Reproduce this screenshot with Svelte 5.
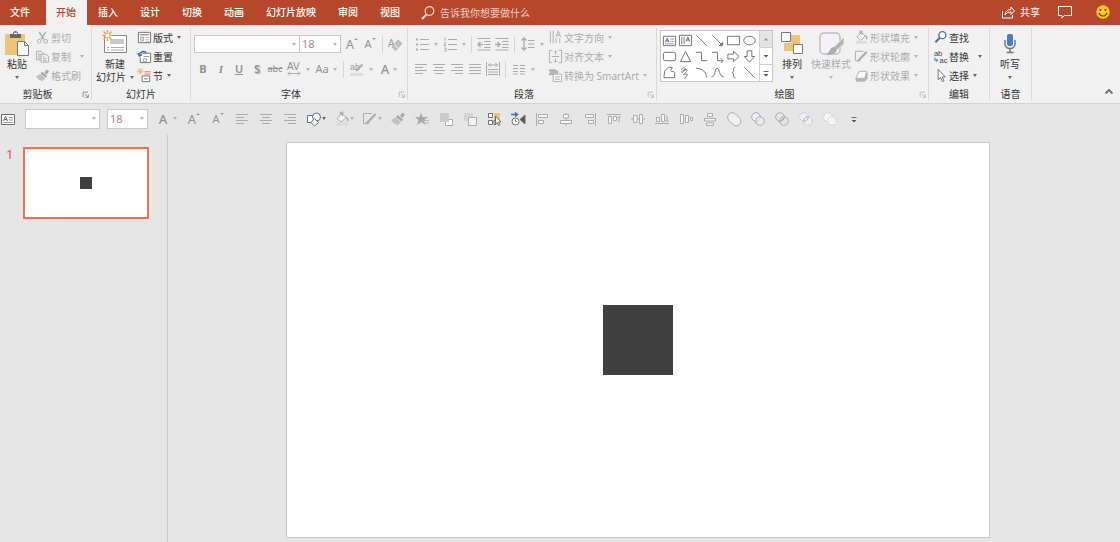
<script lang="ts">
	type Tool = { icon?: string; text?: string; label: string; caret?: boolean; on?: boolean; cls?: string };

	const tabs = ['文件', '开始', '插入', '设计', '切换', '动画', '幻灯片放映', '审阅', '视图'];
	let activeTab = $state('开始');
	let query = $state('');

	const clipboard: Tool[] = [
		{ icon: 'cut', label: '剪切' },
		{ icon: 'copy', label: '复制', caret: true, cls: 'far' },
		{ icon: 'brush', label: '格式刷' }
	];
	const slideTools: Tool[] = [
		{ icon: 'layout', label: '版式', caret: true, on: true },
		{ icon: 'reset', label: '重置', on: true },
		{ icon: 'section', label: '节', caret: true, on: true }
	];
	const paragraph: Tool[] = [
		{ icon: 'textDir', label: '文字方向', caret: true },
		{ icon: 'textAlign', label: '对齐文本', caret: true },
		{ icon: 'smartArt', label: '转换为 SmartArt', caret: true }
	];
	const shapeTools: Tool[] = [
		{ icon: 'bucket', label: '形状填充', caret: true },
		{ icon: 'outline', label: '形状轮廓', caret: true },
		{ icon: 'effect', label: '形状效果', caret: true }
	];
	const editTools: Tool[] = [
		{ icon: 'find', label: '查找', on: true },
		{ icon: 'replace', label: '替换', caret: true, on: true, cls: 'far' },
		{ icon: 'cursor', label: '选择', caret: true, on: true }
	];

	const gallery = [
		'textbox', 'vtextbox', 'line', 'arrowLine', 'rect', 'oval',
		'round', 'triangle', 'elbow', 'elbowArrow', 'rightArrow', 'downArrow',
		'freeform', 'scribble', 'arc', 'curve', 'brace', 'line'
	];

	const quick: Tool[] = [
		{ icon: 'alignLeft', label: '左对齐' },
		{ icon: 'alignCenter', label: '居中' },
		{ icon: 'alignRight', label: '右对齐' },
		{ icon: 'shapes', label: '形状', caret: true, on: true },
		{ icon: 'bucket', label: '填充', caret: true },
		{ icon: 'outline', label: '轮廓', caret: true },
		{ icon: 'brush', label: '格式刷' },
		{ icon: 'star', label: '动画' },
		{ icon: 'forward', label: '上移一层' },
		{ icon: 'backward', label: '下移一层' },
		{ icon: 'selectPane', label: '选择窗格', on: true },
		{ icon: 'animPane', label: '动画窗格', on: true },
		{ icon: 'objLeft', label: '左对齐对象' },
		{ icon: 'objCenter', label: '水平居中' },
		{ icon: 'objRight', label: '右对齐对象' },
		{ icon: 'objTop', label: '顶端对齐' },
		{ icon: 'objMiddle', label: '垂直居中' },
		{ icon: 'objBottom', label: '底端对齐' },
		{ icon: 'distH', label: '横向分布' },
		{ icon: 'distV', label: '纵向分布' },
		{ icon: 'union', label: '结合' },
		{ icon: 'combine', label: '组合' },
		{ icon: 'fragment', label: '拆分' },
		{ icon: 'intersect', label: '相交' },
		{ icon: 'subtract', label: '剪除' },
		{ icon: 'more', label: '自定义快速访问工具栏', on: true }
	];

	const box = 'fill="#f6f6f6"';

	// everything small is drawn on a 16 x 16 grid
	const icons: Record<string, string> = {
		search: '<circle cx="9.500" cy="6" r="4.300" stroke-width="1.300"/><path d="M6.500 9.500L2 14" stroke-width="1.800"/>',
		share: '<path d="M2.500 7v7h10v-3M5 11c.5-4 3-5.500 6-5.500V3l3.500 4L11 10.500V8c-3 0-4.500 1-6 3z"/>',
		comment: '<path d="M1.500 2.500h13v9H7.500L5 14v-2.500H1.500z"/>',
		cut: '<path d="M4.500 2l5 8M11.500 2l-5 8" stroke-width="1.500"/><circle cx="4.500" cy="12" r="2"/><circle cx="11.500" cy="12" r="2"/>',
		copy: '<path d="M1.500 2.500h5l2 2v7h-7zM3 5.500h3M3 7.500h3M3 9.500h3"/><path d="M6.500 5.500h5l3 2.500v6h-8z" fill="#f1f1f1"/><path d="M8.500 8.500h2M8.500 10.500h4M8.500 12.500h4"/>',
		brush: '<path d="M10 5l2.500-3.500L15 3.500 12.500 7z" fill="#a6a6a6" stroke="none"/><path d="M7.500 4l5.500 4.500-1.500 2L6 6z" fill="#a6a6a6" stroke="none"/><path d="M5.500 6.500l5.500 4.500-4 3.500-1.500-2-1 .5L1 9z" fill="#c0c0c0" stroke="none"/>',
		layout: '<path d="M1.500 2.500h13v11h-13z" fill="#fff"/><path d="M3 5h10" stroke="#999" stroke-width="1.500"/><path d="M4 7.500h3v4H4z" fill="#ddd" stroke="#aaa"/><path d="M9 8h4M9 10h4M9 12h4" stroke="#bbb"/>',
		reset: '<path d="M5.500 4.500h9v10h-11V9" fill="#fff"/><path d="M7 8h6M7 10.500h3v3H7z" stroke="#999"/><path d="M2.500 7C3 3 6 1.500 10 3.500M1 4.500l1.500 3 3-1.500" stroke="#3b6ea5" stroke-width="1.500"/>',
		section: '<path d="M8 4h6.500" stroke="#d9735a"/><path d="M8 6.500h6.500" stroke="#d9735a"/><path d="M5.500 8.500h8v6h-8z" fill="#fff"/><path d="M7.500 11.500h4"/><path d="M3.500 0v7M0 3.500h7M1 1l5 5M6 1L1 6" stroke="#ecb25e"/>',
		textDir: '<path d="M2.500 1v13M5.500 1v13M8.500 9v5M12.500 9v5M8.500 7.500L11 1l2.500 6.500M9.500 5.500h3"/>',
		textAlign: '<path d="M4.500 1.500h-3v13h3M11.500 1.500h3v13h-3M4 8h8M8 2v4M6.500 3.500L8 2l1.500 1.500M8 10v4M6.500 12.500L8 14l1.500-1.500"/>',
		smartArt: '<path d="M1 2h7l3 2.500L8 7H1l2-2.500z" fill="#b5b5b5"/><path d="M5.500 6.500h9v8h-9z" fill="#f6f6f6"/><path d="M7.500 9.500h5M7.500 12h5"/>',
		bucket: '<path d="M3 7.500L8 2.500l4 4-5 4.500z" fill="#f6f6f6"/><path d="M6.500 4V1.500h2V5M12 6c1.500 1 2 2.500 1.500 4" stroke-width="1.500"/><path d="M2 13h12" stroke="#dcdcdc" stroke-width="3"/>',
		outline: '<path d="M10 2.500H1.500v10h3"/><path d="M5.500 11.500L13.500 3" stroke-width="2.200"/><path d="M4 13l2.500-.7-1.500-1.500z" fill="#aaa"/>',
		effect: '<path d="M5.500 3.500h8L11.500 11H2z" fill="#fafafa"/><path d="M2 11.500h9.500L14 5v6l-2.500 3h-9z" fill="#b4b4b4" stroke="#b4b4b4"/>',
		find: '<g stroke="#3f72ad"><circle cx="10" cy="5.500" r="3.700" fill="#fff" stroke-width="1.400"/><path d="M7 8.500L2.500 13" stroke-width="2.200"/></g>',
		replace: '<g stroke="none" fill="#444" font-family="Liberation Sans" font-size="8"><text x="1" y="7">ab</text><text x="7" y="15">ac</text></g><path d="M2 9v3h3M3.500 10.500L5 12l-1.500 1.500" stroke="#3f72ad"/>',
		cursor: '<path d="M5.500 1.500v11l2.600-2.400 2 4.400 1.700-.8-2-4.200h3.400z" fill="#fff"/>',
		alignLeft: '<path d="M2 3.500h12M2 6.500h8M2 9.500h12M2 12.500h8"/>',
		alignCenter: '<path d="M2 3.500h12M4 6.500h8M2 9.500h12M4 12.500h8"/>',
		alignRight: '<path d="M2 3.500h12M6 6.500h8M2 9.500h12M6 12.500h8"/>',
		justify: '<path d="M2 3.500h12M2 6.500h12M2 9.500h12M2 12.500h12"/>',
		distribute: '<path d="M1.500 1v14M14.500 1v14M3.500 4h9M5.500 2l-2 2 2 2M10.500 2l2 2-2 2M3 8.500h10M3 11h10M3 13.500h10"/>',
		columns: '<path d="M2 4.500h5M2 7.500h5M2 10.500h5M2 13h5M9 4.500h5M9 7.500h5M9 10.500h5M9 13h5"/>',
		bullets: '<path d="M6 3.500h9M6 8.500h9M6 13.500h9"/><path d="M2 3.500h2M2 8.500h2M2 13.500h2" stroke-width="2"/>',
		numbers: '<path d="M6 3.500h9M6 8.500h9M6 13.500h9M3 1.500v3M2 7h2L2 9.500h2M2 12h2v3H2"/>',
		outdent: '<path d="M1.500 2.500h13M8 5.500h6.500M8 8.500h6.500M8 11.500h6.500M1.500 14h13"/><path d="M7 8.500H2M4.500 6L2 8.500 4.500 11" stroke-width="1.500"/>',
		indent: '<path d="M1.500 2.500h13M8 5.500h6.500M8 8.500h6.500M8 11.500h6.500M1.500 14h13"/><path d="M1 8.500h5M3.500 6L6 8.500 3.500 11" stroke-width="1.500"/>',
		spacing: '<path d="M4 2v12M1.500 4.500L4 2l2.500 2.500M1.500 11.500L4 14l2.500-2.500" stroke-width="1.300"/><path d="M8 4.500h6.500M8 8h6.500M8 11.500h6.500"/>',
		eraser: '<text x="1" y="11" font-size="10" font-family="Liberation Sans" fill="#999" stroke="none">A</text><path d="M5 11L11 4l4 3.500L8.500 14.500z" fill="#c0c0c0" stroke="#b4b4b4"/><path d="M7 8.500l4 3.500" stroke="#f1f1f1"/>',
		highlight: '<text x="1" y="9" font-size="9" font-family="Liberation Sans" fill="#999" stroke="none">ab</text><path d="M7 10l6.500-6.500" stroke-width="2"/><path d="M1 13.500h13" stroke="#dcdcdc" stroke-width="3"/>',
		charSpace: '<text x="1" y="9" font-size="10" font-family="Liberation Sans" fill="#8c8c8c" stroke="none">AV</text><path d="M2 12.500h12M4 10.500l-2 2 2 2M12 10.500l2 2-2 2"/>',
		textbox: '<path d="M1.500 3.500h13v10h-13z" fill="#fff"/><path d="M3.500 10l2-4.500 2 4.500M4.200 8.500h2.500" stroke="#4a6890"/><path d="M9 6.500h4M9 9h4M3.500 11.500H13" stroke="#999"/>',
		vtextbox: '<path d="M1.500 2.500h13v11h-13z" fill="#fff"/><path d="M4 4v8M6.500 4v8" stroke="#777"/><path d="M8.500 9l2-4.500L12.500 9M9.200 7.500h2.500" stroke="#4a6890"/>',
		line: '<path d="M2.500 2.500l11 11"/>',
		arrowLine: '<path d="M2.500 2.500l11 11M13.500 10v3.500H10z"/>',
		rect: '<path d="M1.500 3.500h13v9h-13z"/>',
		oval: '<ellipse cx="8" cy="8" rx="6.200" ry="4.500"/>',
		round: '<rect x="1.500" y="3.500" width="13" height="9" rx="2"/>',
		triangle: '<path d="M8 2.500l5.500 11h-11z"/>',
		elbow: '<path d="M2 3.500h6v9h6"/>',
		elbowArrow: '<path d="M2 3.500h6v9h6M11.500 10l2.500 2.500-2.500 2.500"/>',
		rightArrow: '<path d="M2 5.500h6V2.500L14 8l-6 5.500v-3H2z"/>',
		downArrow: '<path d="M5.500 2v6H2.500L8 14l5.500-6h-3V2z"/>',
		freeform: '<path d="M2 13.500L3 6l4-3.500h4L9 6c1 2 4 0 4.500 2v5.500z"/>',
		scribble: '<path d="M4 5c1-4 5-2 3 1S2 8 5 6s6-2 4 1-5 4-2 3 4 0 2 2-3 3-1 2"/>',
		arc: '<path d="M2 3.500c7 0 11 4 11.500 10"/>',
		curve: '<path d="M1.500 12.500c5 0 3-9 6-9s2 9 7 9"/>',
		brace: '<path d="M10 2.500c-2 0-2 1-2 3s0 2-1.500 2.500C8 8.500 8 9 8 11s0 2.500 2 2.500"/>',
		shapes: '<path d="M1.500 4.500h8v7h-8z" fill="#fff" stroke="#5f6f86"/><circle cx="10.500" cy="6" r="4" fill="#f2f4f8" stroke="#5f6f86"/><path d="M8.500 7.500l4 4-4 3.500-3.500-3.500z" fill="#fff" stroke="#5f6f86"/>',
		star: '<path d="M7 1.500l1.500 4.500H14l-4 3 1.500 5-4-3-4.500 3L4.500 9 1 6h4.500z" fill="#a8a8a8" stroke="none"/><path d="M9 9.500h6M10 12h5" stroke="#b8b8b8"/>',
		forward: '<path d="M7.500 8.500h7v6h-7z" fill="#fff"/><path d="M2 2h9v9H2z" fill="#ccc" stroke="none"/>',
		backward: '<path d="M2 2h9v8H2z" fill="#d4d4d4" stroke="none"/><path d="M6.500 6.500h8v8h-8z" fill="#f3f3f3"/>',
		selectPane: '<path d="M8 2h6v7H8z" fill="#f3c07b" stroke="none"/><path d="M2.500 2.500h4v4h-4zM2.500 9.500h4v4h-4z" fill="#fff"/><path d="M8 9.500h2v4H8z" fill="#fff"/><path d="M9.500 5v8l1.800-1.500 1.200 3 1.400-.6-1.300-2.900H15z" fill="#fff"/>',
		animPane: '<path d="M1 3.500h6M5 1.500l2.500 2L5 5.500" stroke="#3f72ad" stroke-width="1.600"/><circle cx="5.500" cy="10.500" r="3.500" fill="#fff"/><path d="M5.500 8.500v2H7"/><path d="M15 4v9l-5-4.500z" fill="#555"/>',
		objLeft: `<path d="M2.500 2v13"/><path d="M4.500 3.500h9v3h-9zM4.500 9.500h5v3h-5z" ${box}/>`,
		objCenter: `<path d="M8 2v13"/><path d="M5.500 3.500h5v3.500h-5zM2.500 9.500h11v3h-11z" ${box}/>`,
		objRight: `<path d="M13.500 2v13"/><path d="M3.500 3.500h8v3h-8zM6.500 9.500h5v3h-5z" ${box}/>`,
		objTop: `<path d="M1 3.500h14"/><path d="M2.500 5.500h3v7h-3zM7.500 5.500h3v4h-3z" ${box}/><path d="M13 5.500v6M11.500 7L13 5.500 14.500 7"/>`,
		objMiddle: `<path d="M1 8h14"/><path d="M3.500 4.500H7v7H3.500zM9.500 3.500h3v9h-3z" ${box}/>`,
		objBottom: `<path d="M1 12.500h14"/><path d="M2.500 6.500h3v4h-3zM7.500 3.500h3v7h-3z" ${box}/><path d="M13 4.500v6M11.500 9l1.500 1.500L14.500 9"/>`,
		distH: `<path d="M2.500 3.500h3v9h-3zM7.500 4.500h3v7h-3zM12.500 6.500h2v3h-2z" ${box}/>`,
		distV: `<path d="M5.500 2.500h5v3h-5zM2.500 7.500h11v2.500h-11zM4.500 12h7v2.500h-7z" ${box}/>`,
		union: '<path d="M3 9.500A4.200 4.200 0 1 1 9.500 3l4 4A4.200 4.200 0 1 1 7 13.500z" fill="#f3eff6"/>',
		combine: '<circle cx="6" cy="6" r="4.300" fill="#f3eff6"/><circle cx="10" cy="10" r="4.300" fill="#f3eff6" fill-opacity=".6"/>',
		fragment: '<circle cx="6" cy="6" r="4.300"/><circle cx="10" cy="10" r="4.300"/><path d="M6.500 10L10 6.500M6 8l2-2M8 10l2-2"/>',
		intersect: '<g stroke-dasharray="1 1.500"><circle cx="6" cy="6" r="4.300" fill="#f3eff6"/><circle cx="10" cy="10" r="4.300" fill="#f3eff6"/></g><path d="M5.800 10.200a4.300 4.300 0 0 1 4.400-4.400 4.300 4.300 0 0 1-4.400 4.400z" fill="#fff"/>',
		subtract: '<g stroke-dasharray="1 2"><circle cx="6" cy="6" r="4.300" fill="#f7f2f9"/><circle cx="10" cy="10" r="4.300" fill="#f7f2f9"/></g>',
		more: '<path d="M5.500 6.500h5"/><path d="M5.500 9h5L8 11.500z" fill="#555" stroke="none"/>',
		moreUp: '<path d="M5.500 9.500h5L8 7z" fill="#999" stroke="none"/>',
		moreDown: '<path d="M5.500 7h5L8 9.500z" fill="#555" stroke="none"/>',
		launcher: '<path d="M5.500 12V5.500H12M8 8l4 4M12.500 8.500v4h-4"/>',
		collapse: '<path d="M4.500 9.500L8 6l3.500 3.500" stroke-width="1.800"/>'
	};
</script>

{#snippet ic(name: string, size = 16)}
	<svg class="icon" width={size} height={size} viewBox="0 0 16 16" aria-hidden="true">{@html icons[name]}</svg>
{/snippet}

{#snippet tool(t: Tool)}
	<button class="tool {t.cls ?? ''}" class:split={t.caret} disabled={!t.on} aria-label={t.label}>
		{#if t.icon}{@render ic(t.icon)}{:else}<span class="glyph">{t.text}</span>{/if}
		{#if t.caret}<span class="caret"></span>{/if}
	</button>
{/snippet}

{#snippet stack(list: Tool[])}
	<div class="stack">
		{#each list as t}
			<button class="row {t.cls ?? ''}" disabled={!t.on}>
				{@render ic(t.icon ?? '', 15)}
				<span>{t.label}</span>
				{#if t.caret}<span class="caret"></span>{/if}
			</button>
		{/each}
	</div>
{/snippet}

{#snippet footer(name: string, launcher: boolean, on = false)}
	<div class="footer">
		<span>{name}</span>
		{#if launcher}<button class="launcher" disabled={!on} aria-label="{name}设置">{@render ic('launcher', 12)}</button>{/if}
	</div>
{/snippet}

{#snippet grow(up: boolean)}
	<button class="tool" disabled aria-label={up ? '增大字号' : '减小字号'}>
		<span class={up ? 'glyph large' : 'glyph'}>A</span><span class="tick" class:down={!up}></span>
	</button>
{/snippet}

{#snippet combos()}
	<div class="combo name">
		<select aria-label="字体" disabled><option></option></select>
		<span class="caret"></span>
	</div>
	<div class="combo size">
		<select aria-label="字号" disabled><option>18</option></select>
		<span class="caret"></span>
	</div>
{/snippet}

<div class="app">
	<header>
		<nav>
			{#each tabs as tab}
				<button class="tab" class:active={tab === activeTab} onclick={() => (activeTab = tab)}>{tab}</button>
			{/each}
		</nav>
		<label class="search">
			{@render ic('search')}
			<input type="text" bind:value={query} placeholder="告诉我你想要做什么" aria-label="告诉我你想要做什么" />
		</label>
		<div class="account">
			<button>{@render ic('share')}共享</button>
			<button aria-label="批注">{@render ic('comment')}</button>
			<button aria-label="反馈">
				<svg width="14" height="14" viewBox="0 0 14 14" aria-hidden="true">
					<circle cx="7" cy="7" r="6.700" fill="#fbc91f" />
					<circle cx="4.500" cy="5" r="1.100" fill="#7a3b12" />
					<circle cx="9.500" cy="5" r="1.100" fill="#7a3b12" />
					<path d="M3 8c1.500 4 6.500 4 8 0" fill="none" stroke="#7a3b12" stroke-width="1.200" />
				</svg>
			</button>
		</div>
	</header>

	<div class="ribbon">
		<section class="group clip">
			<div class="body">
				<button class="big">
					<svg width="26" height="26" viewBox="0 0 26 26" aria-hidden="true">
						<path d="M1 4h20v21H1z" fill="#eec477" />
						<path d="M6 8V4h3c0-4 5-4 5 0h3v4z" fill="#666" />
						<path d="M10 3.500h3" stroke="#fff" stroke-width="1.500" />
						<path d="M13.500 11.500h7l4 4v10h-11z" fill="#fff" stroke="#777" />
						<path d="M20.500 11.500v4h4" fill="none" stroke="#777" />
					</svg>
					<span>粘贴</span>
					<span class="second"><span class="caret"></span></span>
				</button>
				{@render stack(clipboard)}
			</div>
			{@render footer('剪贴板', true, true)}
		</section>

		<section class="group slides">
			<div class="body">
				<button class="big">
					<svg width="26" height="26" viewBox="0 0 26 26" aria-hidden="true">
						<path d="M2.500 5.500h22v17h-22z" fill="#fff" stroke="#888" />
						<path d="M8 9h14v5H8z" fill="#c9c9c9" />
						<path d="M5 17.500h2M9 17.500h13M5 20h2M9 20h13" stroke="#aaa" />
						<path d="M5.500 0v11M0 5.500h11M1.500 1.500l8 8M9.500 1.500l-8 8" stroke="#eaa84f" stroke-width="1.500" />
						<circle cx="5.500" cy="5.500" r="2" fill="#fff" />
					</svg>
					<span>新建</span>
					<span class="second">幻灯片<span class="caret"></span></span>
				</button>
				{@render stack(slideTools)}
			</div>
			{@render footer('幻灯片', false)}
		</section>

		<section class="group font">
			<div class="body">
				<div class="lines">
					<div class="line">
						{@render combos()}
						<div class="pair">
							{@render grow(true)}
							{@render grow(false)}
						</div>
						<i class="bar"></i>
						{@render tool({ icon: 'eraser', label: '清除格式' })}
					</div>
					<div class="line">
						{@render tool({ text: 'B', label: '加粗', cls: 'bold' })}
						{@render tool({ text: 'I', label: '倾斜', cls: 'italic' })}
						{@render tool({ text: 'U', label: '下划线', cls: 'under' })}
						{@render tool({ text: 'S', label: '阴影', cls: 'shadow' })}
						{@render tool({ text: 'abc', label: '删除线', cls: 'strike' })}
						{@render tool({ icon: 'charSpace', label: '字符间距', caret: true })}
						{@render tool({ text: 'Aa', label: '更改大小写', caret: true })}
						<i class="bar"></i>
						{@render tool({ icon: 'highlight', label: '突出显示', caret: true })}
						{@render tool({ text: 'A', label: '字体颜色', caret: true, cls: 'color' })}
					</div>
				</div>
			</div>
			{@render footer('字体', true)}
		</section>

		<section class="group para">
			<div class="body">
				<div class="lines">
					<div class="line">
						{@render tool({ icon: 'bullets', label: '项目符号', caret: true })}
						{@render tool({ icon: 'numbers', label: '编号', caret: true })}
						<i class="bar"></i>
						{@render tool({ icon: 'outdent', label: '降低列表级别' })}
						{@render tool({ icon: 'indent', label: '提高列表级别' })}
						<i class="bar"></i>
						{@render tool({ icon: 'spacing', label: '行距', caret: true })}
					</div>
					<div class="line">
						{@render tool({ icon: 'alignLeft', label: '左对齐' })}
						{@render tool({ icon: 'alignCenter', label: '居中' })}
						{@render tool({ icon: 'alignRight', label: '右对齐' })}
						{@render tool({ icon: 'justify', label: '两端对齐' })}
						{@render tool({ icon: 'distribute', label: '分散对齐' })}
						<i class="bar"></i>
						{@render tool({ icon: 'columns', label: '分栏', caret: true })}
					</div>
				</div>
				{@render stack(paragraph)}
			</div>
			{@render footer('段落', true)}
		</section>

		<section class="group draw">
			<div class="body">
				<div class="gallery">
					<div class="cells">
						{#each gallery as shape}
							<button aria-label={shape}>{@render ic(shape, 15)}</button>
						{/each}
					</div>
					<div class="spin">
						<button disabled aria-label="上一行">{@render ic('moreUp')}</button>
						<button aria-label="下一行">{@render ic('moreDown')}</button>
						<button aria-label="其他">{@render ic('more')}</button>
					</div>
				</div>
				<button class="big">
					<svg width="26" height="26" viewBox="0 0 26 26" aria-hidden="true">
						<path d="M12 5h9v9h-9zM5 13h9v8H5z" fill="#eec477" />
						<path d="M2.500 2.500h9v9h-9zM14.500 14.500h9v9h-9z" fill="#fff" stroke="#777" />
					</svg>
					<span>排列</span>
					<span class="second"><span class="caret"></span></span>
				</button>
				<button class="big" disabled>
					<svg width="26" height="26" viewBox="0 0 26 26" aria-hidden="true">
						<rect x="2" y="3" width="20" height="21" rx="4" fill="#f6f1f8" stroke="#bdbdbd" stroke-width="1.500" />
						<path d="M26 7v7l-7 6-3-3z" fill="#b4b4b4" stroke="#f1f1f1" stroke-width=".7" />
						<path d="M16 17c2 0 3.500 2 2.500 4s-5 4.500-11 4c4-1 3-7 8.500-8z" fill="#adadad" />
					</svg>
					<span>快速样式</span>
					<span class="second"><span class="caret"></span></span>
				</button>
				{@render stack(shapeTools)}
			</div>
			{@render footer('绘图', true)}
		</section>

		<section class="group edit">
			<div class="body">{@render stack(editTools)}</div>
			{@render footer('编辑', false)}
		</section>

		<section class="group voice">
			<div class="body">
				<button class="big">
					<svg width="26" height="26" viewBox="0 0 26 26" aria-hidden="true">
						<rect x="10" y="4" width="6" height="12" rx="2" fill="#4a7ebb" />
						<path d="M8 10v4c0 6 10 6 10 0v-4M13 18.500v4M9.500 22.500h7" fill="none" stroke="#777" stroke-width="1.500" />
					</svg>
					<span>听写</span>
					<span class="second"><span class="caret"></span></span>
				</button>
			</div>
			{@render footer('语音', false)}
		</section>
		<button class="collapse" aria-label="折叠功能区">{@render ic('collapse')}</button>
	</div>

	<div class="quick">
		<button class="tool first" aria-label="文本框">{@render ic('textbox')}</button>
		{@render combos()}
		<div class="pair">
			{@render tool({ text: 'A', label: '字体颜色', caret: true, cls: 'color' })}
			{@render grow(true)}
			{@render grow(false)}
		</div>
		{#each quick as t}
			{@render tool(t)}
		{/each}
	</div>

	<main>
		<aside>
			<span class="number">1</span>
			<button class="thumb" aria-label="幻灯片 1"><span class="square"></span></button>
		</aside>
		<div class="stage">
			<div class="slide"><div class="square"></div></div>
		</div>
	</main>
</div>

<style>
	:global(body) {
		margin: 0;
	}

	.app {
		display: flex;
		flex-direction: column;
		min-height: 100vh;
		background: #e6e6e6;
		color: #333;
		font: 10px/14px 'Noto Sans', 'Noto Sans CJK SC', sans-serif;
	}

	button,
	select,
	input {
		margin: 0;
		padding: 0;
		border: 0;
		background: none;
		color: inherit;
		font: inherit;
	}

	button {
		white-space: nowrap;
	}

	button:disabled {
		color: #ababab;
	}

	.icon {
		display: block;
		flex: none;
		fill: none;
		stroke: currentColor;
	}

	.ribbon .icon,
	.quick .icon {
		color: #6e6e6e;
	}

	.ribbon button:disabled .icon,
	.quick button:disabled .icon {
		color: #ababab;
	}

	.caret {
		flex: none;
		width: 0;
		height: 0;
		border: 2px solid transparent;
		border-top: 3px solid #666;
		border-bottom: 0;
	}

	button:disabled .caret,
	.combo .caret {
		border-top-color: #b4b4b4;
	}

	header {
		display: flex;
		height: 25px;
		background: #b7472a;
		color: #fff;
	}

	nav {
		display: flex;
	}

	.tab {
		padding: 0 11px 2px;
		font-weight: 500;
	}

	.tab:first-child {
		padding: 0 16px 2px 10px;
	}

	.tab.active {
		padding-left: 10px;
		background: #f1f1f1;
		color: #b7472a;
	}

	.search {
		display: flex;
		align-items: center;
		gap: 4px;
		margin-left: 9px;
		color: #f7dcd4;
	}

	.search input {
		width: 120px;
		outline: none;
	}

	.search input::placeholder {
		color: #f0cfc5;
		opacity: 1;
	}

	.account {
		display: flex;
		align-items: center;
		gap: 17px;
		margin-left: auto;
		padding: 0 10px 2px;
	}

	.account button {
		display: flex;
		align-items: center;
		gap: 4px;
	}

	.account button:last-child {
		margin-left: 6px;
	}

	.ribbon {
		display: flex;
		padding: 3px 0;
		background: #f1f1f1;
		border-bottom: 1px solid #d2d2d2;
	}

	.group {
		display: flex;
		flex-direction: column;
		border-right: 1px solid #dadada;
	}

	.body {
		display: flex;
		height: 57px;
	}

	.footer {
		display: flex;
		align-items: center;
		height: 15px;
	}

	.footer span {
		flex: 1;
		padding-top: 2px;
		text-align: center;
	}

	.launcher {
		display: flex;
		align-self: flex-end;
		justify-content: flex-end;
		width: 16px;
	}

	.big {
		display: flex;
		flex-direction: column;
		align-items: center;
		padding-top: 2px;
	}

	.big > span {
		height: 14px;
		margin-top: 1px;
	}

	.big .second {
		display: flex;
		align-items: center;
		gap: 4px;
		height: 12px;
		margin: 0;
	}

	.row {
		display: flex;
		align-items: center;
		gap: 1px;
		height: 19px;
	}

	.row .caret {
		margin-left: 3px;
	}

	.row.far .caret {
		margin-left: 8px;
	}

	.lines {
		display: flex;
		flex-direction: column;
		gap: 7px;
		padding-top: 7px;
	}

	.line {
		display: flex;
		align-items: center;
		height: 18px;
	}

	.bar {
		width: 1px;
		height: 17px;
		margin: 0 3px;
		background: #d6d6d6;
	}

	.tool {
		display: flex;
		align-items: center;
		justify-content: center;
		width: 18px;
		height: 18px;
	}

	.tool.split {
		width: 28px;
		gap: 4px;
	}

	.glyph {
		color: #929292;
		font-size: 11px;
	}

	.glyph.large,
	.color .glyph {
		font-size: 13px;
	}

	.color .glyph {
		font-weight: 500;
	}

	.tick {
		align-self: flex-start;
		margin-top: 3px;
		border: 2px solid transparent;
		border-top: 0;
		border-bottom: 2px solid #999;
	}

	.tick.down {
		border-top: 2px solid #999;
		border-bottom: 0;
	}

	.bold .glyph {
		font-weight: 700;
	}

	.italic .glyph {
		font-family: 'Liberation Serif', serif;
		font-style: italic;
		font-weight: 700;
	}

	.under .glyph {
		font-weight: 600;
		text-decoration: underline;
	}

	.shadow .glyph {
		font-weight: 600;
		text-shadow: 1px 1px 1px #aaa;
	}

	.strike .glyph {
		font-size: 9px;
		text-decoration: line-through;
	}

	.combo {
		position: relative;
		display: flex;
		height: 18px;
		box-sizing: border-box;
		border: 1px solid #c8c8c8;
		background: #fdfdfd;
	}

	.combo select {
		flex: 1;
		min-width: 0;
		padding-left: 2px;
		appearance: none;
		color: #a88f8a;
		font-size: 11px;
		opacity: 1;
	}

	.combo .caret {
		position: absolute;
		top: 7px;
		right: 3px;
	}

	.name {
		width: 106px;
	}

	.size {
		width: 41px;
	}

	.font .size {
		border-left: 0;
	}

	.pair {
		display: flex;
	}

	.clip .body {
		padding: 0 2px 0 4px;
	}

	.clip .stack {
		margin: 0 5px;
	}

	.slides .body {
		padding: 0 9px 0 4px;
	}

	.slides .stack {
		margin-left: 3px;
	}

	.font .body {
		padding: 0 3px;
	}

	.font .pair {
		margin-left: 2px;
	}

	.para .body {
		gap: 2px;
		padding: 0 9px 0 4px;
	}

	.draw .body {
		padding: 0 10px 0 3px;
	}

	.draw .big {
		margin-left: 6px;
	}

	.draw .stack {
		margin-left: 3px;
	}

	.edit .body {
		padding: 0 7px 0 4px;
	}

	.voice .body {
		padding: 0 8px 0 7px;
	}

	.gallery {
		display: flex;
		align-self: flex-start;
		margin-top: 2px;
		border: 1px solid #c6c6c6;
		background: #fff;
	}

	.cells {
		display: grid;
		grid-template-columns: repeat(6, 16px);
		grid-auto-rows: 16px;
		padding: 1px;
	}

	.spin {
		display: flex;
		flex-direction: column;
		width: 12px;
		border-left: 1px solid #d0d0d0;
	}

	.spin button {
		display: flex;
		flex: 1;
		align-items: center;
		justify-content: center;
	}

	.spin button + button {
		border-top: 1px solid #d0d0d0;
	}

	.spin button:disabled {
		background: #e4e4e4;
	}

	.collapse {
		align-self: flex-end;
		margin-left: auto;
		padding-right: 3px;
	}

	.quick {
		display: flex;
		align-items: center;
		height: 29px;
	}

	.quick .tool {
		width: 24px;
	}

	.quick .tool.first {
		width: 16px;
		margin-right: 9px;
	}

	.quick .split {
		width: 28px;
		gap: 0;
	}

	.quick .combo {
		height: 20px;
	}

	.quick .name {
		width: 75px;
		margin-right: 7px;
	}

	.quick .pair {
		margin-left: 6px;
	}

	.quick .color {
		gap: 6px;
	}

	main {
		display: flex;
		flex: 1;
		padding-top: 2px;
	}

	aside {
		display: flex;
		align-items: flex-start;
		gap: 10px;
		box-sizing: border-box;
		width: 15%;
		padding: 12px 18px 0 6px;
		border-right: 1px solid #c9c9c9;
	}

	.number {
		color: #d9593b;
		font-size: 13px;
	}

	.thumb,
	.slide {
		display: grid;
		flex: 1;
		place-items: center;
		box-sizing: border-box;
		aspect-ratio: 16 / 9;
		background: #fff;
	}

	.thumb {
		aspect-ratio: 7 / 4;
		border: 2px solid #f07050;
	}

	.slide {
		border: 1px solid #c9c9c9;
	}

	.square {
		width: 10%;
		aspect-ratio: 1;
		background: #404040;
	}

	.stage {
		display: flex;
		flex: 1;
		align-items: flex-start;
		padding: 7px 130px 2px 118px;
	}
</style>
